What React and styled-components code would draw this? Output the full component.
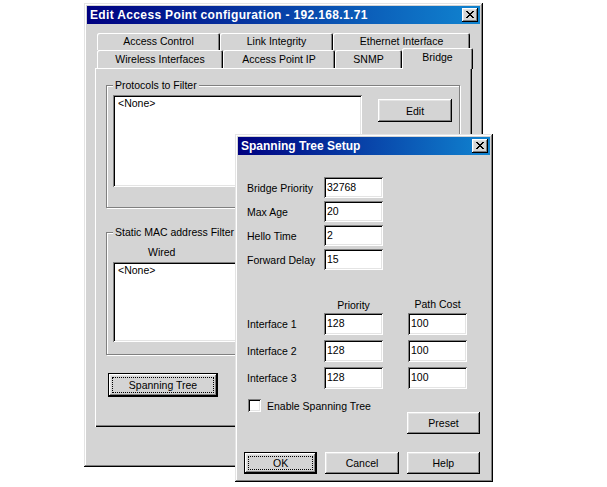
import React from 'react';
import styled, { createGlobalStyle, css } from 'styled-components';

const FACE = '#d4d4d4';
const HI = '#ffffff';
const LIGHT = '#e4e4e4';
const SHADOW = '#808080';
const DARK = '#000000';

const GlobalStyle = createGlobalStyle`
  html, body { margin: 0; padding: 0; background: #fff; }
  body {
    font-family: "Liberation Sans", Arial, sans-serif;
    font-size: 10.5px;
    color: #000;
  }
  *, *::before, *::after { box-sizing: border-box; }
`;

const raisedBevel = css`
  box-shadow: inset -1px -1px ${DARK}, inset 1px 1px ${HI}, inset -2px -2px ${SHADOW}, inset 2px 2px ${LIGHT};
`;
const defaultBevel = css`
  box-shadow: inset 0 0 0 1px ${DARK}, inset -2px -2px ${DARK}, inset 2px 2px ${HI}, inset -3px -3px ${SHADOW}, inset 3px 3px ${LIGHT};
`;
const sunkenBevel = css`
  box-shadow: inset 1px 1px ${SHADOW}, inset -1px -1px ${HI}, inset 2px 2px ${DARK}, inset -2px -2px ${LIGHT};
`;

const Desktop = styled.div`
  position: relative;
  width: 607px;
  height: 487px;
  overflow: hidden;
  background: #fff;
`;

const Window = styled.section`
  position: absolute;
  left: ${p => p.$x}px;
  top: ${p => p.$y}px;
  width: ${p => p.$w}px;
  height: ${p => p.$h}px;
  padding: 3px;
  background: ${FACE};
  box-shadow: inset -1px -1px ${DARK}, inset 1px 1px ${LIGHT}, inset -2px -2px ${SHADOW}, inset 2px 2px ${HI};
  display: flex;
  flex-direction: column;
`;

const TitleBar = styled.header`
  flex: none;
  height: 18px;
  display: flex;
  align-items: center;
  justify-content: space-between;
  padding: 0 2px 0 3px;
  background: linear-gradient(to right, #000080, #1084d0);
  color: #fff;
  font-weight: bold;
  font-size: 12px;
  letter-spacing: ${p => p.$spacing || 0}px;
  white-space: nowrap;
`;

const CloseButton = styled.span`
  width: 16px;
  height: 14px;
  background: ${FACE};
  ${raisedBevel}
  display: grid;
  place-items: center;
  padding-bottom: 1px;
`;

const CloseGlyph = () => (
  <svg width="8" height="7" viewBox="0 0 8 7" shapeRendering="crispEdges">
    <path
      fill="#000"
      d="M0 0h2v1H0zM6 0h2v1H6zM1 1h2v1H1zM5 1h2v1H5zM2 2h4v1H2zM3 3h2v1H3zM2 4h4v1H2zM1 5h2v1H1zM5 5h2v1H5zM0 6h2v1H0zM6 6h2v1H6z"
    />
  </svg>
);

/* ---------- tabs ---------- */
const TabStrip = styled.div`
  margin: 9px 0 0 8px;
  display: flex;
  flex-direction: column;
`;

const TabRow = styled.div`
  display: flex;
  height: ${p => p.$h}px;
  padding-left: 2px;
`;

const Tab = styled.div`
  flex: none;
  width: ${p => p.$w}px;
  height: 100%;
  line-height: ${p => p.$h}px;
  background: ${FACE};
  box-shadow: inset 1px 1px ${HI}, inset -1px 0 ${DARK}, inset -2px 0 ${SHADOW};
  border-radius: 2px 2px 0 0;
  text-align: center;
  white-space: nowrap;
  ${p => p.$active && css`
    position: relative;
    z-index: 1;
    height: 21px;
    line-height: 19px;
    margin-top: -2px;
  `}
`;

const TabPanel = styled.div`
  width: 377px;
  height: 359px;
  background: ${FACE};
  box-shadow: inset 1px 1px ${HI}, inset -1px -1px ${DARK}, inset -2px -2px ${SHADOW};
  padding: 17px 12px 0 11px;
  display: flex;
  flex-direction: column;
  align-items: flex-start;
`;

/* ---------- group boxes ---------- */
const GroupBox = styled.div`
  position: relative;
  flex: none;
  align-self: stretch;
  height: 123px;
  margin-top: ${p => p.$mt || 0}px;
  border: 1px solid ${SHADOW};
  box-shadow: inset 1px 1px ${HI}, 1px 1px ${HI};
  padding: ${p => p.$pad};
  display: flex;
  flex-direction: ${p => p.$dir || 'row'};
  align-items: flex-start;
`;

const GroupLabel = styled.span`
  position: absolute;
  top: -7px;
  left: 6px;
  padding: 0 2px;
  background: ${FACE};
  line-height: 13px;
  white-space: nowrap;
`;

const ListBox = styled.div`
  flex: none;
  width: ${p => p.$w}px;
  height: ${p => p.$h}px;
  margin-top: ${p => p.$mt || 0}px;
  background: #fff;
  ${sunkenBevel}
  padding: 2px 5px;
  line-height: 13px;
`;

const ColumnCaption = styled.div`
  line-height: 14px;
  margin-left: ${p => p.$ml}px;
`;

/* ---------- controls ---------- */
const Button = styled.button`
  position: relative;
  flex: none;
  align-self: ${p => p.$align || 'auto'};
  width: ${p => (p.$w ? `${p.$w}px` : 'auto')};
  height: ${p => p.$h || 23}px;
  margin: ${p => p.$m || 0};
  padding: 0;
  border: 0;
  font: inherit;
  color: #000;
  background: ${FACE};
  ${p => (p.$default ? defaultBevel : raisedBevel)}
  ${p => p.$default && css`
    &::after {
      content: '';
      position: absolute;
      inset: 4px;
      border: 1px dotted #000;
    }
  `}
`;

const TextField = styled.input`
  width: 59px;
  height: ${p => p.$h || 21}px;
  margin: 0;
  border: 0;
  outline: none;
  padding: 0 3px 2px;
  font: inherit;
  color: #000;
  background: #fff;
  ${sunkenBevel}
`;

const DialogBody = styled.div`
  flex: 1;
  display: flex;
  flex-direction: column;
  padding: 22px 10px 0 9px;
`;

const FormGrid = styled.div`
  display: grid;
  grid-template-columns: 77px 59px;
  grid-auto-rows: 21px;
  row-gap: 3px;
  align-items: center;
  white-space: nowrap;
`;

const PortGrid = styled.div`
  display: grid;
  grid-template-columns: 52px 59px 59px;
  column-gap: 25px;
  grid-auto-rows: ${p => p.$row}px;
  row-gap: 5px;
  align-items: center;
  margin-top: ${p => p.$mt}px;
  white-space: nowrap;
`;

const Heading = styled.span`
  text-align: center;
  line-height: 14px;
  margin-top: ${p => (p.$up ? -3 : 0)}px;
`;

const CheckRow = styled.label`
  display: flex;
  align-items: center;
  gap: 6px;
  height: 13px;
  margin: 10px 0 0 1px;
`;

const CheckBox = styled.span`
  flex: none;
  width: 13px;
  height: 13px;
  background: #fff;
  ${sunkenBevel}
`;

const ButtonRow = styled.div`
  display: grid;
  grid-template-columns: repeat(3, 1fr);
  column-gap: 8px;
  margin: 18px 0 0 -3px;
`;

const rowOne = [
  { label: 'Access Control', w: 123 },
  { label: 'Link Integrity', w: 113 },
  { label: 'Ethernet Interface', w: 137 },
];
const rowTwo = [
  { label: 'Wireless Interfaces', w: 126 },
  { label: 'Access Point IP', w: 112 },
  { label: 'SNMP', w: 67 },
  { label: 'Bridge', w: 71, active: true },
];

const timers = [
  ['Bridge Priority', '32768'],
  ['Max Age', '20'],
  ['Hello Time', '2'],
  ['Forward Delay', '15'],
];

const ports = ['Interface 1', 'Interface 2', 'Interface 3'];

export default function App() {
  return (
    <>
      <GlobalStyle />
      <Desktop>
        <Window $x={84} $y={3} $w={399} $h={464}>
          <TitleBar $spacing={0.35}>
            <span>Edit Access Point configuration - 192.168.1.71</span>
            <CloseButton><CloseGlyph /></CloseButton>
          </TitleBar>
          <TabStrip>
            <TabRow $h={17}>
              {rowOne.map(t => (
                <Tab key={t.label} $w={t.w} $h={17}>{t.label}</Tab>
              ))}
            </TabRow>
            <TabRow $h={18}>
              {rowTwo.map(t => (
                <Tab key={t.label} $w={t.w} $h={18} $active={t.active}>{t.label}</Tab>
              ))}
            </TabRow>
            <TabPanel>
              <GroupBox $pad="9px 0 0 6px">
                <GroupLabel>Protocols to Filter</GroupLabel>
                <ListBox $w={249} $h={92}>&lt;None&gt;</ListBox>
                <Button $w={74} $h={23} $m="4px 0 0 16px">Edit</Button>
              </GroupBox>
              <GroupBox $mt={24} $pad="12px 0 0 6px" $dir="column">
                <GroupLabel>Static MAC address Filter</GroupLabel>
                <ColumnCaption $ml={35}>Wired</ColumnCaption>
                <ListBox $w={150} $h={80} $mt={3}>&lt;None&gt;</ListBox>
              </GroupBox>
              <Button $default $w={110} $h={24} $m="18px 0 0 2px">Spanning Tree</Button>
            </TabPanel>
          </TabStrip>
        </Window>

        <Window $x={235} $y={134} $w={258} $h={348}>
          <TitleBar>
            <span>Spanning Tree Setup</span>
            <CloseButton><CloseGlyph /></CloseButton>
          </TitleBar>
          <DialogBody>
            <FormGrid>
              {timers.map(([label, value]) => (
                <React.Fragment key={label}>
                  <span>{label}</span>
                  <TextField readOnly value={value} />
                </React.Fragment>
              ))}
            </FormGrid>
            <PortGrid $row={14} $mt={28}>
              <span />
              <Heading>Priority</Heading>
              <Heading $up>Path Cost</Heading>
            </PortGrid>
            <PortGrid $row={22} $mt={1}>
              {ports.map(p => (
                <React.Fragment key={p}>
                  <span>{p}</span>
                  <TextField $h={22} readOnly value="128" />
                  <TextField $h={22} readOnly value="100" />
                </React.Fragment>
              ))}
            </PortGrid>
            <CheckRow>
              <CheckBox />
              <span>Enable Spanning Tree</span>
            </CheckRow>
            <Button $w={73} $h={22} $align="flex-end">Preset</Button>
            <ButtonRow>
              <Button $default $h={22}>OK</Button>
              <Button $h={22}>Cancel</Button>
              <Button $h={22}>Help</Button>
            </ButtonRow>
          </DialogBody>
        </Window>
      </Desktop>
    </>
  );
}
